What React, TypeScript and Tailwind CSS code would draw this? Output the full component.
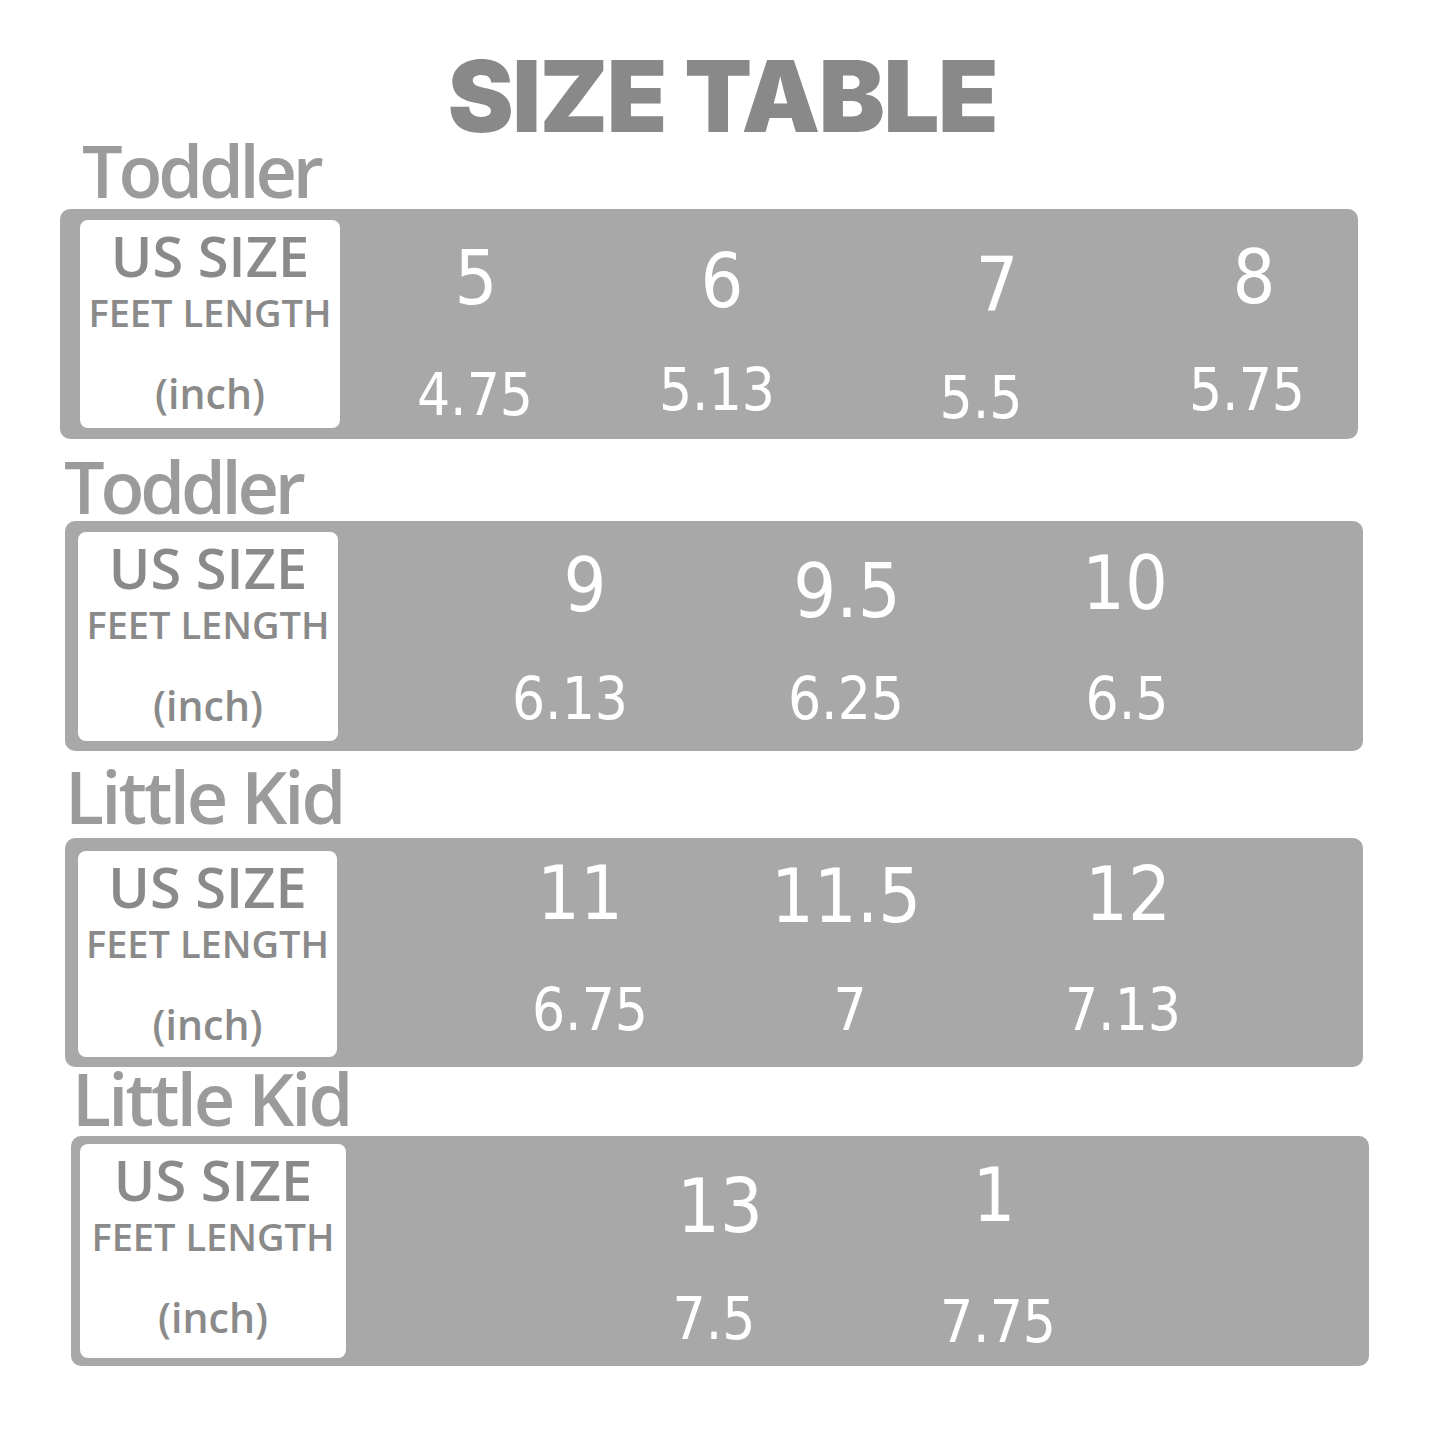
type Cell = { text: string; cls: string };

type Block = {
  label: string;
  labelCls: string;
  tableCls: string;
  boxCls: string;
  top: Cell[];
  bottom: Cell[];
};

const BLOCKS: Block[] = [
  {
    label: "Toddler",
    labelCls: "-mt-[12px] ml-[82px] tracking-[-0.058em]",
    tableCls: "mt-[3px] ml-[60px] h-[230px]",
    boxCls: "ml-[20px] mt-[11px] h-[208px] w-[260px]",
    top: [
      { text: "5", cls: "ml-[56px] mt-[32px]" },
      { text: "6", cls: "ml-[86px] mt-[35px]" },
      { text: "7", cls: "ml-[115px] mt-[38px]" },
      { text: "8", cls: "ml-[97px] mt-[31px]" },
    ],
    bottom: [
      { text: "4.75", cls: "ml-[55px] mt-[42px]" },
      { text: "5.13", cls: "ml-[82px] mt-[37px]" },
      { text: "5.5", cls: "ml-[104px] mt-[45px]" },
      { text: "5.75", cls: "ml-[106px] mt-[37px]" },
    ],
  },
  {
    label: "Toddler",
    labelCls: "mt-[11px] ml-[64px] tracking-[-0.058em]",
    tableCls: "-mt-[1px] ml-[65px] h-[230px]",
    boxCls: "ml-[13px] mt-[11px] h-[209px] w-[260px]",
    top: [
      { text: "9", cls: "ml-[167px] mt-[27px]" },
      { text: "9.5", cls: "ml-[102px] mt-[33px]" },
      { text: "10", cls: "ml-[118px] mt-[25px]" },
    ],
    bottom: [
      { text: "6.13", cls: "ml-[152px] mt-[34px]" },
      { text: "6.25", cls: "ml-[116px] mt-[34px]" },
      { text: "6.5", cls: "ml-[121px] mt-[34px]" },
    ],
  },
  {
    label: "Little Kid",
    labelCls: "mt-[9px] ml-[65px] tracking-[-0.04em]",
    tableCls: "mt-[6px] ml-[65px] h-[229px]",
    boxCls: "ml-[13px] mt-[13px] h-[206px] w-[259px]",
    top: [
      { text: "11", cls: "ml-[163px] mt-[18px]" },
      { text: "11.5", cls: "ml-[106px] mt-[21px]" },
      { text: "12", cls: "ml-[122px] mt-[19px]" },
    ],
    bottom: [
      { text: "6.75", cls: "ml-[173px] mt-[28px]" },
      { text: "7", cls: "ml-[100px] mt-[28px]" },
      { text: "7.13", cls: "ml-[113px] mt-[28px]" },
    ],
  },
  {
    label: "Little Kid",
    labelCls: "-mt-[5px] ml-[72px] tracking-[-0.04em]",
    tableCls: "mt-[2px] ml-[71px] h-[230px]",
    boxCls: "ml-[9px] mt-[8px] h-[214px] w-[266px]",
    top: [
      { text: "13", cls: "ml-[294px] mt-[33px]" },
      { text: "1", cls: "ml-[114px] mt-[22px]" },
    ],
    bottom: [
      { text: "7.5", cls: "ml-[288px] mt-[39px]" },
      { text: "7.75", cls: "ml-[124px] mt-[42px]" },
    ],
  },
];

function SizeBlock({ block }: { block: Block }) {
  return (
    <>
      <h2
        className={`${block.labelCls} font-['Open_Sans',sans-serif] text-[72px] font-semibold leading-none text-[#9b9b9b]`}
      >
        {block.label}
      </h2>
      <div className={`${block.tableCls} flex w-[1298px] shrink-0 rounded-[10px] bg-[#a9a8a9]`}>
        <div
          className={`${block.boxCls} flex shrink-0 flex-col items-center rounded-[8px] bg-white pt-[7px] font-['Open_Sans',sans-serif] font-semibold leading-none text-[#8a8a8a]`}
        >
          <span className="text-[56px] leading-none">US SIZE</span>
          <span className="mt-[10px] text-[38px] leading-none">FEET LENGTH</span>
          <span className="mt-[42px] text-[41px] leading-none">(inch)</span>
        </div>
        <div className="flex flex-col font-['DejaVu_Sans_Condensed','DejaVu_Sans',sans-serif] text-white">
          <div className="flex h-[115px] items-start">
            {block.top.map((c) => (
              <span
                key={c.text}
                className={`${c.cls} w-[160px] shrink-0 text-center text-[75px] leading-none`}
              >
                {c.text}
              </span>
            ))}
          </div>
          <div className="flex items-start">
            {block.bottom.map((c) => (
              <span
                key={c.text}
                className={`${c.cls} w-[160px] shrink-0 text-center text-[58px] leading-none`}
              >
                {c.text}
              </span>
            ))}
          </div>
        </div>
      </div>
    </>
  );
}

export default function App() {
  return (
    <div className="flex h-[1445px] w-[1445px] flex-col overflow-hidden bg-white pt-[47px]">
      <h1 className="text-center font-['Inter',sans-serif] text-[99px] font-black leading-none tracking-[-0.015em] text-[#898989]">
        SIZE TABLE
      </h1>
      {BLOCKS.map((b, i) => (
        <SizeBlock key={i} block={b} />
      ))}
    </div>
  );
}
